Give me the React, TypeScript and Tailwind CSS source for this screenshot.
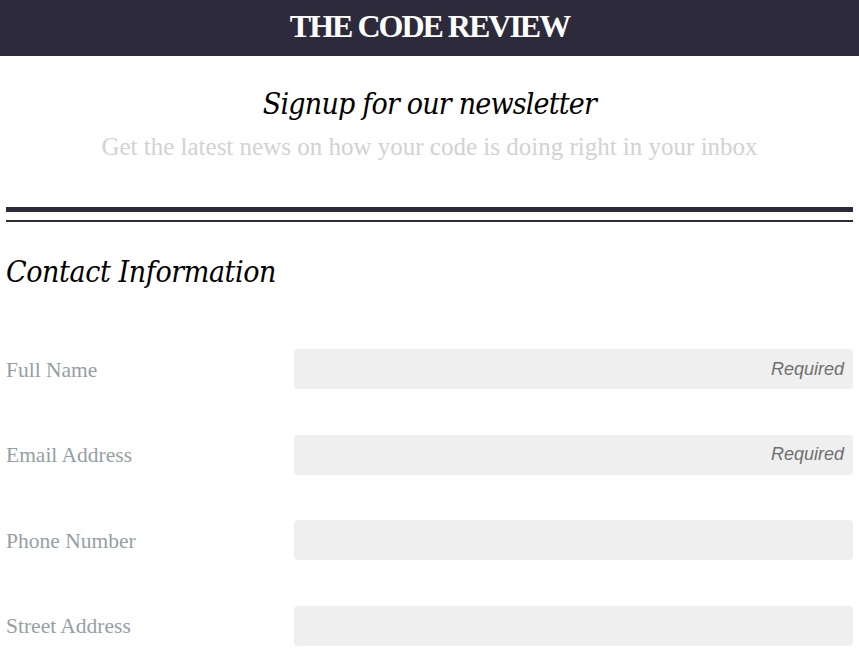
export default function App() {
  const rows = [
    { label: "Full Name", req: true },
    { label: "Email Address", req: true },
    { label: "Phone Number", req: false },
    { label: "Street Address", req: false },
  ];
  return (
    <div className="w-[859px] h-[656px] overflow-hidden bg-white">
      <header className="h-[56px] bg-[#2d2b3b] flex items-center justify-center">
        <h1 className="text-white text-[32px] font-bold tracking-[-2px] font-['Liberation_Serif',serif] leading-none pb-[4px]">
          THE CODE REVIEW
        </h1>
      </header>
      <div className="text-center pt-[30px]">
        <h2 className="italic text-[30px] leading-[36px] text-black font-['DejaVu_Serif_Condensed','DejaVu_Serif',serif] tracking-[-0.8px]">
          Signup for our newsletter
        </h2>
        <p className="mt-[10px] text-[25px] leading-[30px] text-[#d2d2d2] font-['Liberation_Serif',serif]">
          Get the latest news on how your code is doing right in your inbox
        </p>
      </div>
      <div className="mx-[6px] mt-[45px]">
        <div className="h-[5px] bg-[#2d2b3b]" />
        <div className="h-[2px] bg-[#2d2b3b] mt-[8px]" />
      </div>
      <h3 className="ml-[6px] mt-[30px] italic text-[30px] leading-[40px] text-black font-['DejaVu_Serif_Condensed','DejaVu_Serif',serif] tracking-[-0.4px]">
        Contact Information
      </h3>
      <div className="mt-[57px] flex flex-col gap-[45.5px] px-[6px]">
        {rows.map((r) => (
          <div key={r.label} className="flex items-center h-[40px]">
            <label className="w-[288px] text-[21.5px] text-[#95a0a4] font-['Liberation_Serif',serif] pt-[2px]">
              {r.label}
            </label>
            <div className="flex-1 h-[40px] rounded-[4px] bg-[#efefef] flex items-center justify-end pr-[9px]">
              {r.req && (
                <span className="italic text-[18px] text-[#6f6f6f] font-['Liberation_Sans',sans-serif]">
                  Required
                </span>
              )}
            </div>
          </div>
        ))}
      </div>
    </div>
  );
}
